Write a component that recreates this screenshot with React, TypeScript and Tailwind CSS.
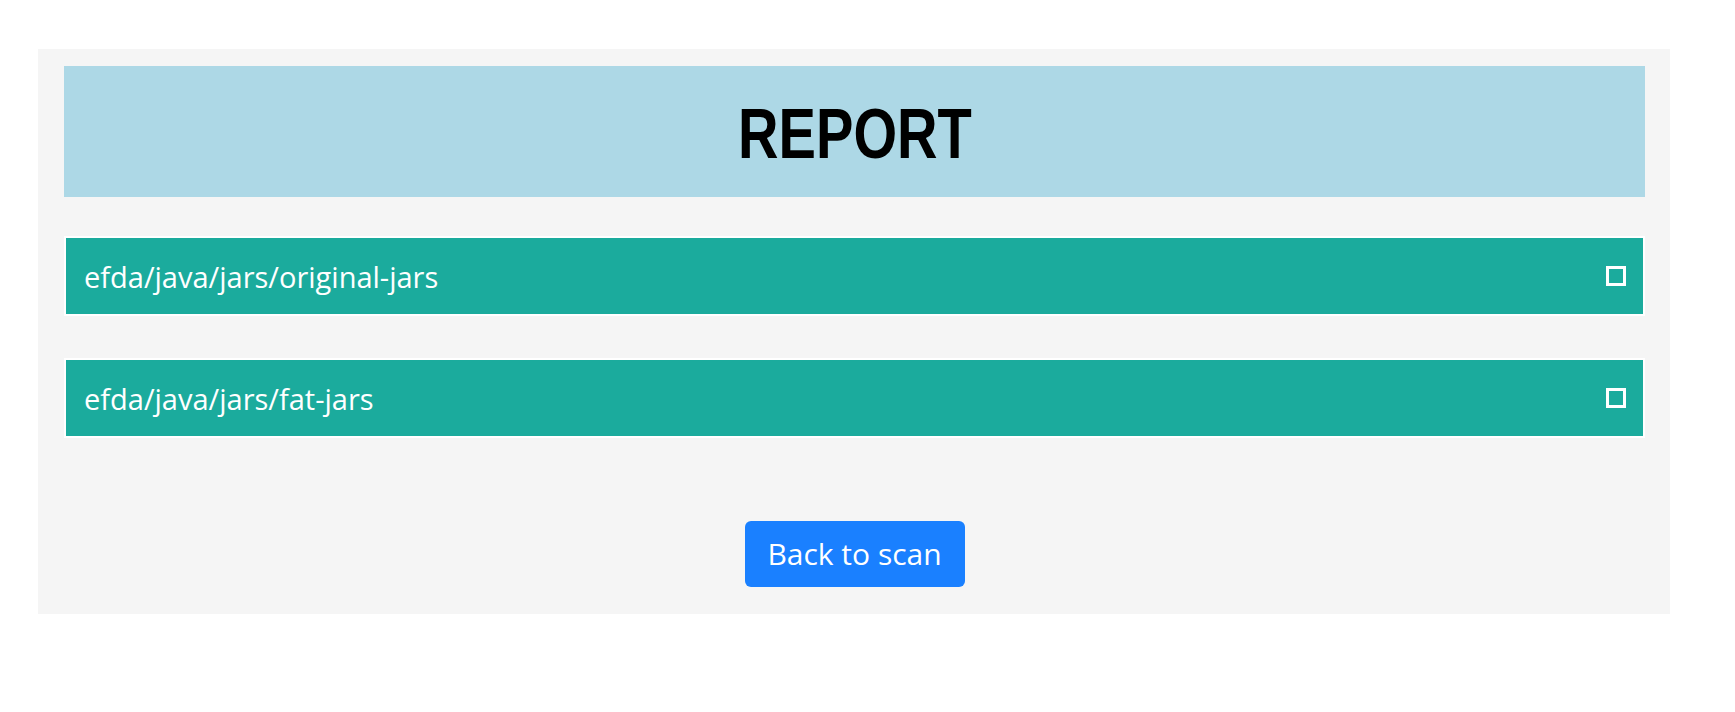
export default function App() {
  const folders = ['efda/java/jars/original-jars', 'efda/java/jars/fat-jars'];

  return (
    <div className="min-h-screen bg-white pt-[49px]" style={{ fontFamily: '"Open Sans", sans-serif' }}>
      <div className="ml-[38px] w-[1632px] bg-[#f5f5f5] pt-[17px] pl-[26px] pr-[25px] pb-[27px]">
        {/* Header */}
        <div className="h-[131px] bg-[#add8e6] flex items-center justify-center">
          <h1
            className="inline-block scale-x-[0.79] text-[71px] font-bold text-black leading-none pt-[4px]"
            style={{ fontFamily: '"Liberation Sans", sans-serif' }}
          >
            REPORT
          </h1>
        </div>

        {/* Folder rows */}
        <div className="mt-[39px] flex flex-col gap-[42px]">
          {folders.map((f) => (
            <div
              key={f}
              className="h-[80px] border-2 border-white bg-[#1bab9d] flex items-center justify-between pl-[18px] pr-[17px]"
            >
              <span className="text-[29px] text-white leading-none pt-[1px]">{f}</span>
              <span className="w-[20px] h-[20px] border-[3px] border-white" />
            </div>
          ))}
        </div>

        {/* Back button */}
        <div className="mt-[83px] flex justify-center">
          <button className="h-[66px] w-[220px] rounded-[6px] bg-[#1a80ff] text-white text-[30px] leading-none">
            Back to scan
          </button>
        </div>
      </div>
    </div>
  );
}
